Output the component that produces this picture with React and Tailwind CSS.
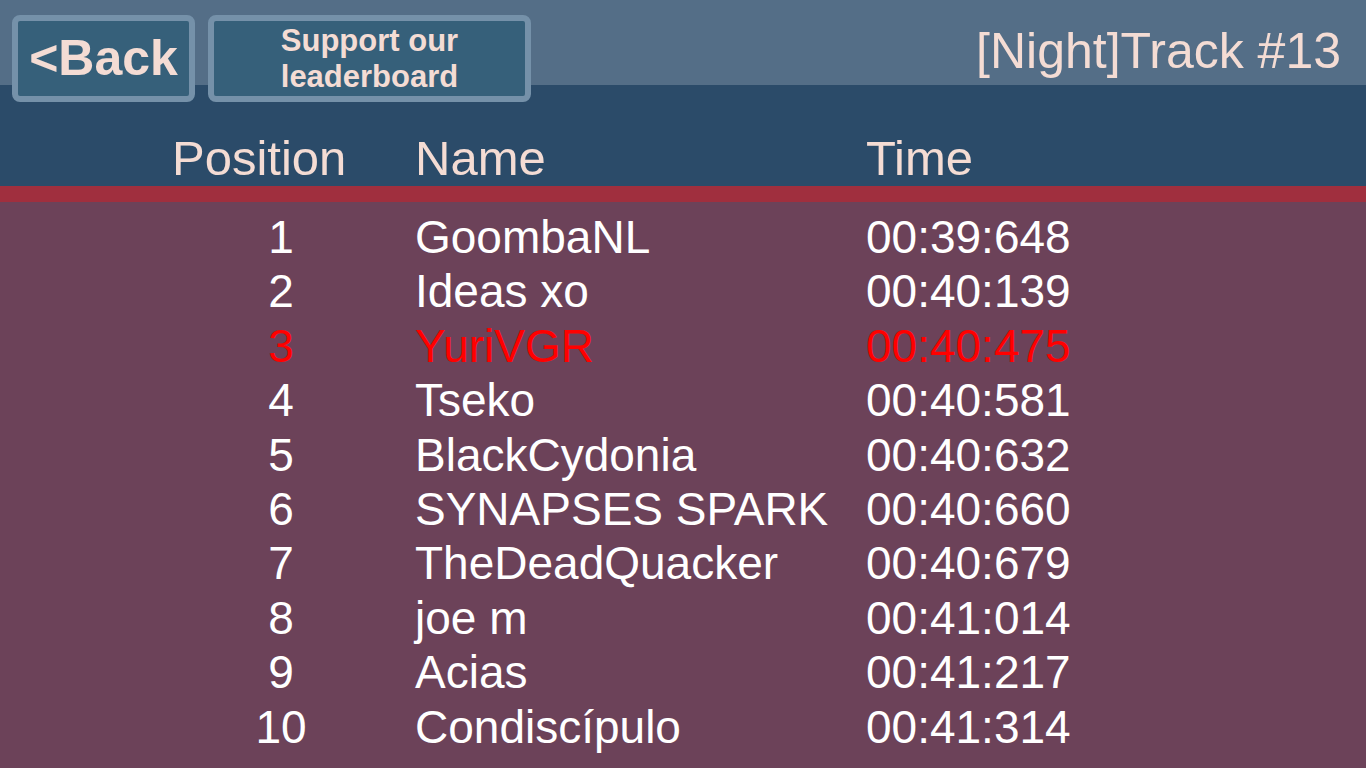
const rows = [
  ['1', 'GoombaNL', '00:39:648'],
  ['2', 'Ideas xo', '00:40:139'],
  ['3', 'YuriVGR', '00:40:475', true],
  ['4', 'Tseko', '00:40:581'],
  ['5', 'BlackCydonia', '00:40:632'],
  ['6', 'SYNAPSES SPARK', '00:40:660'],
  ['7', 'TheDeadQuacker', '00:40:679'],
  ['8', 'joe m', '00:41:014'],
  ['9', 'Acias', '00:41:217'],
  ['10', 'Condiscípulo', '00:41:314'],
]

function Btn({ className, children }) {
  return (
    <button className={`h-[87px] rounded-[8px] border-[6px] border-[#7591a9] bg-[#36607a] text-[#f4dcd4] font-bold flex items-center justify-center ${className}`}>
      {children}
    </button>
  )
}

export default function App() {
  return (
    <div className="w-[1366px] h-[768px] overflow-hidden bg-[#6c4259] font-['Liberation_Sans',Arial,sans-serif]">
      <div className="h-[186px] bg-[linear-gradient(to_bottom,#546e87_85px,#2b4b69_85px)] flex flex-col">
        <div className="h-[130px] flex items-start pt-[15px] pl-[12px] pr-[25px] gap-[13px]">
          <Btn className="w-[183px] text-[50px] leading-none pb-[2px]">&lt;Back</Btn>
          <Btn className="w-[323px] text-[31px] leading-[36px] text-center">
            <span>Support our<br />leaderboard</span>
          </Btn>
          <div className="ml-auto mt-[6px] text-[50px] leading-[60px] text-[#f4dcd4]">[Night]Track #13</div>
        </div>
        <div className="grid grid-cols-[218px_426px_1fr] gap-x-[25px] pl-[172px] h-[56px] text-[49px] leading-[56px] text-[#f4dcd4]">
          <div>Position</div>
          <div>Name</div>
          <div>Time</div>
        </div>
      </div>
      <div className="h-[16px] bg-[#a02f3e]" />
      <div className="pt-[8px]">
        {rows.map(([pos, name, time, me]) => (
          <div
            key={pos}
            className={`grid grid-cols-[218px_426px_1fr] gap-x-[25px] pl-[172px] h-[54.4px] text-[46px] leading-[54.4px] whitespace-nowrap ${me ? 'text-[#ff0000]' : 'text-white'}`}
          >
            <div className="text-center">{pos}</div>
            <div>{name}</div>
            <div>{time}</div>
          </div>
        ))}
      </div>
    </div>
  )
}
